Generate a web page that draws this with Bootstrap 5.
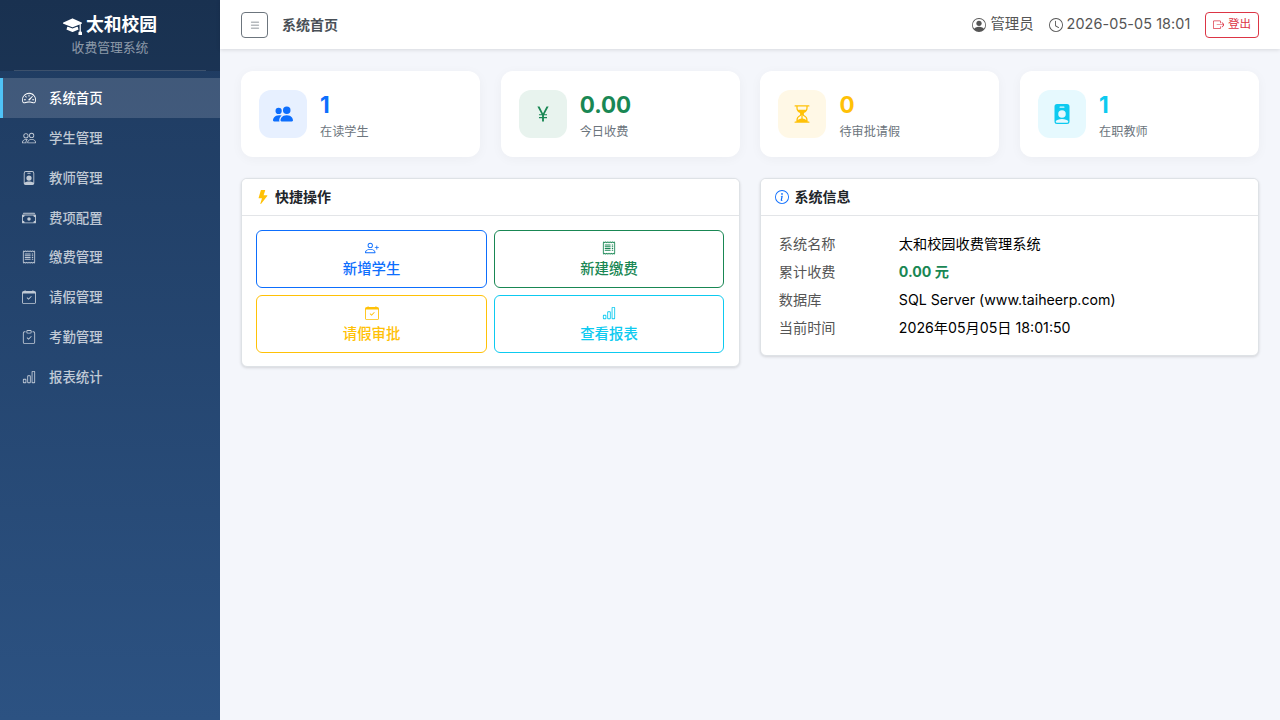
<!DOCTYPE html>
<html lang="zh-CN">
<head>
    <meta charset="UTF-8">
    <meta name="viewport" content="width=device-width, initial-scale=1.0">
    <title>系统首页 - 太和校园收费管理系统</title>
    <link href="https://cdn.jsdelivr.net/npm/bootstrap@5.3.0/dist/css/bootstrap.min.css" rel="stylesheet">
    <style>
        body { font-family: Inter, "Noto Sans CJK SC", sans-serif; background: #f4f6fb; height: 720px; overflow: hidden; }
        .ico { width: 1em; height: 1em; fill: currentColor; flex: none; display: inline-block; }
        .side-bar { width: 220px; height: 720px; background: linear-gradient(180deg, #1e3a5f 0%, #2c5282 100%); flex: none; }
        .side-brand { height: 71px; padding-top: 13px; background: rgba(0,0,0,.15); color: #fff; font-size: 17.8px; line-height: 24px; font-weight: 700; position: relative; }
        .side-brand .ico { font-size: 19px; }
        .side-brand small { display: block; font-size: 12.8px; line-height: 18px; margin-top: 2px; font-weight: 400; color: rgba(255,255,255,.5); }
        .side-brand::after { content: ""; position: absolute; left: 14px; right: 14px; bottom: 0; border-bottom: 1px solid rgba(255,255,255,.15); }
        .side-menu { margin-top: 7.4px; }
        .side-link { height: 39.8px; padding-left: 19px; border-left: 3px solid transparent; color: rgba(255,255,255,.72); font-size: 13.4px; font-weight: 500; gap: 13px; }
        .side-link .ico { font-size: 14px; }
        .side-link.active { background: rgba(255,255,255,.15); border-left-color: #4fc3f7; color: #fff; }
        .top-bar { height: 49px; box-shadow: 0 1px 4px rgba(0,0,0,.12); padding: 0 21px; flex: none; }
        .menu-btn { width: 27px; height: 26px; padding: 0; font-size: 12px; border-color: #6c757d; color: #6c757d; border-radius: 4px; }
        .page-title { font-size: 14px; font-weight: 700; color: #495057; margin-left: 14px; }
        .top-info { font-size: 14.4px; color: #555; line-height: 1; }
        .top-info .ico { font-size: 14px; }
        .top-user { margin-right: 15px; }
        .top-date { letter-spacing: .1px; margin-right: 14px; }
        .logout-btn { font-size: 11.5px; padding: 0 7px; height: 26px; gap: 4px; border-radius: 4px; }
        .logout-btn .ico { font-size: 11.5px; }
        .page-body { padding: 21.5px 21px; }
        .stat-row { --bs-gutter-x: 20.8px; --bs-gutter-y: 21px; }
        .stat-box { height: 86px; padding: 19px 18px; border-radius: 12px; box-shadow: 0 2px 12px rgba(0,0,0,.04); gap: 13px; }
        .stat-icon { width: 48px; height: 48px; border-radius: 12px; font-size: 20px; }
        .stat-text { padding-top: 4px; }
        .stat-num { font-size: 22.4px; font-weight: 700; line-height: 28px; }
        .stat-label { font-size: 12.16px; color: #6c757d; line-height: 18px; margin-top: 4px; }
        .tint-blue { background: #e7f0ff; }
        .tint-green { background: #e8f3ee; }
        .tint-yellow { background: #fff8e6; }
        .tint-cyan { background: #e6f9fe; }
        .panel { border: 1px solid #dee2e6; border-radius: 6px; box-shadow: 0 1px 3px rgba(0,0,0,.14); }
        .panel .card-header { height: 37px; padding: 0 14px; background: #fff; border-bottom-color: #e3e5e8; font-size: 14px; font-weight: 700; color: #212529; gap: 5px; }
        .panel .card-body { padding: 14.4px 14.4px 13.6px; }
        .quick-grid { display: grid; grid-template-columns: 1fr 1fr; gap: 7px; }
        .quick-btn { height: 58px; padding: 3px 0 0; font-size: 14.4px; font-weight: 500; line-height: 20px; gap: 4px; }
        .quick-btn .ico { font-size: 14px; }
        .info-table { margin: 0; font-size: 14.2px; color: #000; }
        .info-table td { padding: 0 3px; height: 28px; vertical-align: middle; background: transparent; color: inherit; }
        .info-table td:first-child { width: 120px; color: #555; }
    </style>
</head>
<body>
    <svg class="d-none">
        <symbol id="i-mortar" viewBox="0 0 16 16"><path d="M8.211 2.047a.5.5 0 0 0-.422 0l-7.5 3.5a.5.5 0 0 0 .025.917l7.5 3a.5.5 0 0 0 .372 0L14 7.14V13a1 1 0 0 0-1 1v2h3v-2a1 1 0 0 0-1-1V6.739l.686-.275a.5.5 0 0 0 .025-.917l-7.5-3.5Z"/><path d="M4.176 9.032a.5.5 0 0 0-.656.327l-.5 1.7a.5.5 0 0 0 .294.605l4.5 1.8a.5.5 0 0 0 .372 0l4.5-1.8a.5.5 0 0 0 .294-.605l-.5-1.7a.5.5 0 0 0-.656-.327L8 10.466 4.176 9.032Z"/></symbol>
        <symbol id="i-speed" viewBox="0 0 16 16"><path d="M8 4a.5.5 0 0 1 .5.5V6a.5.5 0 0 1-1 0V4.5A.5.5 0 0 1 8 4zM3.732 5.732a.5.5 0 0 1 .707 0l.915.914a.5.5 0 1 1-.708.708l-.914-.915a.5.5 0 0 1 0-.707zM2 10a.5.5 0 0 1 .5-.5h1.586a.5.5 0 0 1 0 1H2.5A.5.5 0 0 1 2 10zm9.5 0a.5.5 0 0 1 .5-.5h1.5a.5.5 0 0 1 0 1H12a.5.5 0 0 1-.5-.5zm.754-4.246a.389.389 0 0 0-.527-.02L7.547 9.31a.91.91 0 1 0 1.302 1.258l3.434-4.297a.389.389 0 0 0-.029-.518z"/><path fill-rule="evenodd" d="M0 10a8 8 0 1 1 15.547 2.661c-.442 1.253-1.845 1.602-2.932 1.25C11.309 13.488 9.475 13 8 13c-1.474 0-3.31.488-4.615.911-1.087.352-2.49.003-2.932-1.25A7.988 7.988 0 0 1 0 10zm8-7a7 7 0 0 0-6.603 9.329c.203.575.923.876 1.68.63C4.397 12.533 6.358 12 8 12s3.604.532 4.923.96c.757.245 1.477-.056 1.68-.631A7 7 0 0 0 8 3z"/></symbol>
        <symbol id="i-people" viewBox="0 0 16 16"><path d="M15 14s1 0 1-1-1-4-5-4-5 3-5 4 1 1 1 1h8Zm-7.978-1A.261.261 0 0 1 7 12.996c.001-.264.167-1.03.76-1.72C8.312 10.629 9.282 10 11 10c1.717 0 2.687.63 3.24 1.276.593.69.758 1.457.76 1.72l-.008.002a.274.274 0 0 1-.014.002H7.022ZM11 7a2 2 0 1 0 0-4 2 2 0 0 0 0 4Zm3-2a3 3 0 1 1-6 0 3 3 0 0 1 6 0ZM6.936 9.28a5.88 5.88 0 0 0-1.23-.247A7.35 7.35 0 0 0 5 9c-4 0-5 3-5 4 0 .667.333 1 1 1h4.216A2.238 2.238 0 0 1 5 13c0-1.01.377-2.042 1.09-2.904.243-.294.526-.569.846-.816ZM4.92 10A5.493 5.493 0 0 0 4 13H1c0-.26.164-1.03.76-1.724.545-.636 1.492-1.256 3.16-1.275ZM1.5 5.5a3 3 0 1 1 6 0 3 3 0 0 1-6 0Zm3-2a2 2 0 1 0 0 4 2 2 0 0 0 0-4Z"/></symbol>
        <symbol id="i-people-fill" viewBox="0 0 16 16"><path d="M7 14s-1 0-1-1 1-4 5-4 5 3 5 4-1 1-1 1H7Zm4-6a3 3 0 1 0 0-6 3 3 0 0 0 0 6Zm-5.784 6A2.238 2.238 0 0 1 5 13c0-1.355.68-2.75 1.936-3.72A6.325 6.325 0 0 0 5 9c-4 0-5 3-5 4s1 1 1 1h4.216ZM4.5 8a2.5 2.5 0 1 0 0-5 2.5 2.5 0 0 0 0 5Z"/></symbol>
        <symbol id="i-badge" viewBox="0 0 16 16"><path d="M6.5 2a.5.5 0 0 0 0 1h3a.5.5 0 0 0 0-1h-3zM11 8a3 3 0 1 1-6 0 3 3 0 0 1 6 0z"/><path d="M4.5 0A2.5 2.5 0 0 0 2 2.5V14a2 2 0 0 0 2 2h8a2 2 0 0 0 2-2V2.5A2.5 2.5 0 0 0 11.5 0h-7zM3 2.5A1.5 1.5 0 0 1 4.5 1h7A1.5 1.5 0 0 1 13 2.5v10.795a4.2 4.2 0 0 0-.776-.492C11.392 12.387 10.063 12 8 12s-3.392.387-4.224.803a4.2 4.2 0 0 0-.776.492V2.5z"/></symbol>
        <symbol id="i-badge-fill" viewBox="0 0 16 16"><path d="M2 2a2 2 0 0 1 2-2h8a2 2 0 0 1 2 2v12a2 2 0 0 1-2 2H4a2 2 0 0 1-2-2V2zm4.5 0a.5.5 0 0 0 0 1h3a.5.5 0 0 0 0-1h-3zM8 11a3 3 0 1 0 0-6 3 3 0 0 0 0 6zm5 2.755C12.146 12.825 10.623 12 8 12s-4.146.826-5 1.755V14a1 1 0 0 0 1 1h8a1 1 0 0 0 1-1v-.245z"/></symbol>
        <symbol id="i-cash" viewBox="0 0 16 16"><path d="M1 3a1 1 0 0 1 1-1h12a1 1 0 0 1 1 1H1zm7 8a2 2 0 1 0 0-4 2 2 0 0 0 0 4z"/><path d="M0 5a1 1 0 0 1 1-1h14a1 1 0 0 1 1 1v8a1 1 0 0 1-1 1H1a1 1 0 0 1-1-1V5zm3 0a2 2 0 0 1-2 2v4a2 2 0 0 1 2 2h10a2 2 0 0 1 2-2V7a2 2 0 0 1-2-2H3z"/></symbol>
        <symbol id="i-receipt" viewBox="0 0 16 16"><path d="M1.92.506a.5.5 0 0 1 .434.14L3 1.293l.646-.647a.5.5 0 0 1 .708 0L5 1.293l.646-.647a.5.5 0 0 1 .708 0L7 1.293l.646-.647a.5.5 0 0 1 .708 0L9 1.293l.646-.647a.5.5 0 0 1 .708 0l.646.647.646-.647a.5.5 0 0 1 .708 0l.646.647.646-.647a.5.5 0 0 1 .801.13l.5 1A.5.5 0 0 1 15 2v12a.5.5 0 0 1-.053.224l-.5 1a.5.5 0 0 1-.8.13L13 14.707l-.646.647a.5.5 0 0 1-.708 0L11 14.707l-.646.647a.5.5 0 0 1-.708 0L9 14.707l-.646.647a.5.5 0 0 1-.708 0L7 14.707l-.646.647a.5.5 0 0 1-.708 0L5 14.707l-.646.647a.5.5 0 0 1-.708 0L3 14.707l-.646.647a.5.5 0 0 1-.801-.13l-.5-1A.5.5 0 0 1 1 14V2a.5.5 0 0 1 .053-.224l.5-1a.5.5 0 0 1 .367-.27zm.217 1.338L2 2.118v11.764l.137.274.51-.51a.5.5 0 0 1 .707 0l.646.647.646-.646a.5.5 0 0 1 .708 0l.646.646.646-.646a.5.5 0 0 1 .708 0l.646.646.646-.646a.5.5 0 0 1 .708 0l.646.646.646-.646a.5.5 0 0 1 .708 0l.646.646.646-.646a.5.5 0 0 1 .708 0l.509.509.137-.274V2.118l-.137-.274-.51.51a.5.5 0 0 1-.707 0L12 1.707l-.646.647a.5.5 0 0 1-.708 0L10 1.707l-.646.647a.5.5 0 0 1-.708 0L8 1.707l-.646.647a.5.5 0 0 1-.708 0L6 1.707l-.646.647a.5.5 0 0 1-.708 0L4 1.707l-.646.647a.5.5 0 0 1-.708 0l-.509-.51z"/><path d="M3 4.5a.5.5 0 0 1 .5-.5h6a.5.5 0 1 1 0 1h-6a.5.5 0 0 1-.5-.5zm0 2a.5.5 0 0 1 .5-.5h6a.5.5 0 1 1 0 1h-6a.5.5 0 0 1-.5-.5zm0 2a.5.5 0 0 1 .5-.5h6a.5.5 0 1 1 0 1h-6a.5.5 0 0 1-.5-.5zm0 2a.5.5 0 0 1 .5-.5h6a.5.5 0 0 1 0 1h-6a.5.5 0 0 1-.5-.5zm8-6a.5.5 0 0 1 .5-.5h1a.5.5 0 0 1 0 1h-1a.5.5 0 0 1-.5-.5zm0 2a.5.5 0 0 1 .5-.5h1a.5.5 0 0 1 0 1h-1a.5.5 0 0 1-.5-.5zm0 2a.5.5 0 0 1 .5-.5h1a.5.5 0 0 1 0 1h-1a.5.5 0 0 1-.5-.5zm0 2a.5.5 0 0 1 .5-.5h1a.5.5 0 0 1 0 1h-1a.5.5 0 0 1-.5-.5z"/></symbol>
        <symbol id="i-calendar" viewBox="0 0 16 16"><path d="M10.854 7.146a.5.5 0 0 1 0 .708l-3 3a.5.5 0 0 1-.708 0l-1.5-1.5a.5.5 0 1 1 .708-.708L7.5 9.793l2.646-2.647a.5.5 0 0 1 .708 0z"/><path d="M3.5 0a.5.5 0 0 1 .5.5V1h8V.5a.5.5 0 0 1 1 0V1h1a2 2 0 0 1 2 2v11a2 2 0 0 1-2 2H2a2 2 0 0 1-2-2V3a2 2 0 0 1 2-2h1V.5a.5.5 0 0 1 .5-.5zM1 4v10a1 1 0 0 0 1 1h12a1 1 0 0 0 1-1V4H1z"/></symbol>
        <symbol id="i-clipboard" viewBox="0 0 16 16"><path d="M10.854 7.146a.5.5 0 0 1 0 .708l-3 3a.5.5 0 0 1-.708 0l-1.5-1.5a.5.5 0 1 1 .708-.708L7.5 9.793l2.646-2.647a.5.5 0 0 1 .708 0z"/><path d="M4 1.5H3a2 2 0 0 0-2 2V14a2 2 0 0 0 2 2h10a2 2 0 0 0 2-2V3.5a2 2 0 0 0-2-2h-1v1h1a1 1 0 0 1 1 1V14a1 1 0 0 1-1 1H3a1 1 0 0 1-1-1V3.5a1 1 0 0 1 1-1h1v-1z"/><path d="M9.5 1a.5.5 0 0 1 .5.5v1a.5.5 0 0 1-.5.5h-3a.5.5 0 0 1-.5-.5v-1a.5.5 0 0 1 .5-.5h3zm-3-1A1.5 1.5 0 0 0 5 1.5v1A1.5 1.5 0 0 0 6.5 4h3A1.5 1.5 0 0 0 11 2.5v-1A1.5 1.5 0 0 0 9.5 0h-3z"/></symbol>
        <symbol id="i-chart" viewBox="0 0 16 16"><path d="M4 11H2v3h2v-3zm5-4H7v7h2V7zm5-5v12h-2V2h2zm-2-1a1 1 0 0 0-1 1v12a1 1 0 0 0 1 1h2a1 1 0 0 0 1-1V2a1 1 0 0 0-1-1h-2zM6 7a1 1 0 0 1 1-1h2a1 1 0 0 1 1 1v7a1 1 0 0 1-1 1H7a1 1 0 0 1-1-1V7zm-5 4a1 1 0 0 1 1-1h2a1 1 0 0 1 1 1v3a1 1 0 0 1-1 1H2a1 1 0 0 1-1-1v-3z"/></symbol>
        <symbol id="i-list" viewBox="0 0 16 16"><path fill-rule="evenodd" d="M2.5 12a.5.5 0 0 1 .5-.5h10a.5.5 0 0 1 0 1H3a.5.5 0 0 1-.5-.5zm0-4a.5.5 0 0 1 .5-.5h10a.5.5 0 0 1 0 1H3a.5.5 0 0 1-.5-.5zm0-4a.5.5 0 0 1 .5-.5h10a.5.5 0 0 1 0 1H3a.5.5 0 0 1-.5-.5z"/></symbol>
        <symbol id="i-person" viewBox="0 0 16 16"><path d="M11 6a3 3 0 1 1-6 0 3 3 0 0 1 6 0z"/><path fill-rule="evenodd" d="M0 8a8 8 0 1 1 16 0A8 8 0 0 1 0 8zm8-7a7 7 0 0 0-5.468 11.37C3.242 11.226 4.805 10 8 10s4.757 1.225 5.468 2.37A7 7 0 0 0 8 1z"/></symbol>
        <symbol id="i-clock" viewBox="0 0 16 16"><path d="M8 3.5a.5.5 0 0 0-1 0V9a.5.5 0 0 0 .252.434l3.5 2a.5.5 0 0 0 .496-.868L8 8.71V3.5z"/><path d="M8 16A8 8 0 1 0 8 0a8 8 0 0 0 0 16zm7-8A7 7 0 1 1 1 8a7 7 0 0 1 14 0z"/></symbol>
        <symbol id="i-exit" viewBox="0 0 16 16"><path fill-rule="evenodd" d="M10 12.5a.5.5 0 0 1-.5.5h-8a.5.5 0 0 1-.5-.5v-9a.5.5 0 0 1 .5-.5h8a.5.5 0 0 1 .5.5v2a.5.5 0 0 0 1 0v-2A1.5 1.5 0 0 0 9.5 2h-8A1.5 1.5 0 0 0 0 3.5v9A1.5 1.5 0 0 0 1.5 14h8a1.5 1.5 0 0 0 1.5-1.5v-2a.5.5 0 0 0-1 0v2z"/><path fill-rule="evenodd" d="M15.854 8.354a.5.5 0 0 0 0-.708l-3-3a.5.5 0 0 0-.708.708L14.293 7.5H5.5a.5.5 0 0 0 0 1h8.793l-2.147 2.146a.5.5 0 0 0 .708.708l3-3z"/></symbol>
        <symbol id="i-yen" viewBox="0 0 16 16"><path d="M8.75 14v-2.629h2.446v-.967H8.75v-1.31h2.445v-.967H9.128L12.5 2h-1.699L8.047 7.327h-.086L5.207 2H3.5l3.363 6.127H4.778v.968H7.25v1.31H4.778v.966H7.25V14h1.5z"/></symbol>
        <symbol id="i-hourglass" viewBox="0 0 16 16"><path d="M2.5 15a.5.5 0 1 1 0-1h1v-1a4.5 4.5 0 0 1 2.557-4.06c.29-.139.443-.377.443-.59v-.7c0-.213-.154-.451-.443-.59A4.5 4.5 0 0 1 3.5 3V2h-1a.5.5 0 0 1 0-1h11a.5.5 0 0 1 0 1h-1v1a4.5 4.5 0 0 1-2.557 4.06c-.29.139-.443.377-.443.59v.7c0 .213.154.451.443.59A4.5 4.5 0 0 1 12.5 13v1h1a.5.5 0 0 1 0 1h-11zm2-13v1c0 .537.12 1.045.337 1.5h6.326c.216-.455.337-.963.337-1.5V2h-7zm3 6.35c0 .701-.478 1.236-1.011 1.492A3.5 3.5 0 0 0 4.5 13s.866-1.299 3-1.48V8.35zm1 0v3.17c2.134.181 3 1.48 3 1.48a3.5 3.5 0 0 0-1.989-3.158C8.978 9.586 8.5 9.052 8.5 8.351z"/></symbol>
        <symbol id="i-person-plus" viewBox="0 0 16 16"><path d="M6 8a3 3 0 1 0 0-6 3 3 0 0 0 0 6zm2-3a2 2 0 1 1-4 0 2 2 0 0 1 4 0zm4 8c0 1-1 1-1 1H1s-1 0-1-1 1-4 6-4 6 3 6 4zm-1-.004c-.001-.246-.154-.986-.832-1.664C9.516 10.68 8.289 10 6 10c-2.29 0-3.516.68-4.168 1.332-.678.678-.83 1.418-.832 1.664h10z"/><path fill-rule="evenodd" d="M13.5 5a.5.5 0 0 1 .5.5V7h1.5a.5.5 0 0 1 0 1H14v1.5a.5.5 0 0 1-1 0V8h-1.5a.5.5 0 0 1 0-1H13V5.5a.5.5 0 0 1 .5-.5z"/></symbol>
        <symbol id="i-bolt" viewBox="0 0 16 16"><path d="M5.52.359A.5.5 0 0 1 6 0h4a.5.5 0 0 1 .474.658L8.694 6H12.5a.5.5 0 0 1 .395.807l-7 9a.5.5 0 0 1-.873-.454L6.823 9.5H3.5a.5.5 0 0 1-.48-.641l2.5-8.5z"/></symbol>
        <symbol id="i-info" viewBox="0 0 16 16"><path d="M8 15A7 7 0 1 1 8 1a7 7 0 0 1 0 14zm0 1A8 8 0 1 0 8 0a8 8 0 0 0 0 16z"/><path d="m8.93 6.588-2.29.287-.082.38.45.083c.294.07.352.176.288.469l-.738 3.468c-.194.897.105 1.319.808 1.319.545 0 1.178-.252 1.465-.598l.088-.42c-.2.176-.492.246-.686.246-.275 0-.375-.193-.304-.533L8.93 6.588zM9 4.5a1 1 0 1 1-2 0 1 1 0 0 1 2 0z"/></symbol>
    </svg>

    <div class="d-flex">
        <!-- sidebar -->
        <div class="side-bar">
            <div class="side-brand text-center">
                <div class="d-flex align-items-center justify-content-center gap-1"><svg class="ico"><use href="#i-mortar"/></svg>太和校园</div>
                <small>收费管理系统</small>
            </div>
            <nav class="side-menu nav flex-column">
                <a class="side-link nav-link d-flex align-items-center active" href="#"><svg class="ico"><use href="#i-speed"/></svg>系统首页</a>
                <a class="side-link nav-link d-flex align-items-center" href="#"><svg class="ico"><use href="#i-people"/></svg>学生管理</a>
                <a class="side-link nav-link d-flex align-items-center" href="#"><svg class="ico"><use href="#i-badge"/></svg>教师管理</a>
                <a class="side-link nav-link d-flex align-items-center" href="#"><svg class="ico"><use href="#i-cash"/></svg>费项配置</a>
                <a class="side-link nav-link d-flex align-items-center" href="#"><svg class="ico"><use href="#i-receipt"/></svg>缴费管理</a>
                <a class="side-link nav-link d-flex align-items-center" href="#"><svg class="ico"><use href="#i-calendar"/></svg>请假管理</a>
                <a class="side-link nav-link d-flex align-items-center" href="#"><svg class="ico"><use href="#i-clipboard"/></svg>考勤管理</a>
                <a class="side-link nav-link d-flex align-items-center" href="#"><svg class="ico"><use href="#i-chart"/></svg>报表统计</a>
            </nav>
        </div>

        <div class="flex-grow-1">
            <!-- top bar -->
            <div class="top-bar bg-white d-flex align-items-center">
                <button class="menu-btn btn d-flex align-items-center justify-content-center"><svg class="ico"><use href="#i-list"/></svg></button>
                <span class="page-title">系统首页</span>
                <div class="ms-auto d-flex align-items-center top-info">
                    <span class="top-user d-flex align-items-center gap-1"><svg class="ico"><use href="#i-person"/></svg>管理员</span>
                    <span class="top-date d-flex align-items-center gap-1"><svg class="ico"><use href="#i-clock"/></svg>2026-05-05 18:01</span>
                    <a class="logout-btn btn btn-outline-danger d-flex align-items-center" href="#"><svg class="ico"><use href="#i-exit"/></svg>登出</a>
                </div>
            </div>

            <div class="page-body">
                <div class="row stat-row">
                    <div class="col-3">
                        <div class="stat-box bg-white d-flex align-items-center">
                            <div class="stat-icon tint-blue text-primary d-flex align-items-center justify-content-center"><svg class="ico"><use href="#i-people-fill"/></svg></div>
                            <div class="stat-text"><div class="stat-num text-primary">1</div><div class="stat-label">在读学生</div></div>
                        </div>
                    </div>
                    <div class="col-3">
                        <div class="stat-box bg-white d-flex align-items-center">
                            <div class="stat-icon tint-green text-success d-flex align-items-center justify-content-center"><svg class="ico"><use href="#i-yen"/></svg></div>
                            <div class="stat-text"><div class="stat-num text-success">0.00</div><div class="stat-label">今日收费</div></div>
                        </div>
                    </div>
                    <div class="col-3">
                        <div class="stat-box bg-white d-flex align-items-center">
                            <div class="stat-icon tint-yellow text-warning d-flex align-items-center justify-content-center"><svg class="ico"><use href="#i-hourglass"/></svg></div>
                            <div class="stat-text"><div class="stat-num text-warning">0</div><div class="stat-label">待审批请假</div></div>
                        </div>
                    </div>
                    <div class="col-3">
                        <div class="stat-box bg-white d-flex align-items-center">
                            <div class="stat-icon tint-cyan text-info d-flex align-items-center justify-content-center"><svg class="ico"><use href="#i-badge-fill"/></svg></div>
                            <div class="stat-text"><div class="stat-num text-info">1</div><div class="stat-label">在职教师</div></div>
                        </div>
                    </div>

                    <div class="col-6">
                        <div class="panel card">
                            <div class="card-header d-flex align-items-center"><svg class="ico text-warning"><use href="#i-bolt"/></svg>快捷操作</div>
                            <div class="card-body">
                                <div class="quick-grid">
                                    <a class="quick-btn btn btn-outline-primary d-flex flex-column align-items-center justify-content-center" href="#"><svg class="ico"><use href="#i-person-plus"/></svg>新增学生</a>
                                    <a class="quick-btn btn btn-outline-success d-flex flex-column align-items-center justify-content-center" href="#"><svg class="ico"><use href="#i-receipt"/></svg>新建缴费</a>
                                    <a class="quick-btn btn btn-outline-warning d-flex flex-column align-items-center justify-content-center" href="#"><svg class="ico"><use href="#i-calendar"/></svg>请假审批</a>
                                    <a class="quick-btn btn btn-outline-info d-flex flex-column align-items-center justify-content-center" href="#"><svg class="ico"><use href="#i-chart"/></svg>查看报表</a>
                                </div>
                            </div>
                        </div>
                    </div>
                    <div class="col-6">
                        <div class="panel card">
                            <div class="card-header d-flex align-items-center"><svg class="ico text-primary"><use href="#i-info"/></svg>系统信息</div>
                            <div class="card-body">
                                <table class="info-table table table-borderless">
                                    <tr><td>系统名称</td><td>太和校园收费管理系统</td></tr>
                                    <tr><td>累计收费</td><td class="fw-bold text-success">0.00 元</td></tr>
                                    <tr><td>数据库</td><td>SQL Server (www.taiheerp.com)</td></tr>
                                    <tr><td>当前时间</td><td>2026年05月05日 18:01:50</td></tr>
                                </table>
                            </div>
                        </div>
                    </div>
                </div>
            </div>
        </div>
    </div>

    <script src="https://cdn.jsdelivr.net/npm/bootstrap@5.3.0/dist/js/bootstrap.bundle.min.js"></script>
</body>
</html>
